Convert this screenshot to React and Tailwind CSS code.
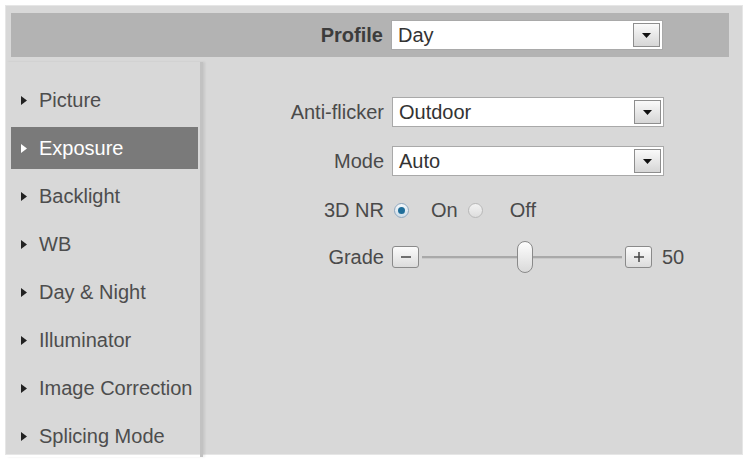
import React from 'react';

const menu = ['Picture', 'Exposure', 'Backlight', 'WB', 'Day & Night', 'Illuminator', 'Image Correction', 'Splicing Mode'];

const DropButton = () => (
  <div className="absolute right-[2px] top-[2px] bottom-[2px] w-[27px] border border-[#8e8e8e] bg-gradient-to-b from-[#fafafa] to-[#d6d6d6] flex items-center justify-center">
    <svg width="9" height="5" viewBox="0 0 9 5"><path d="M0 0h9L4.5 5z" fill="#111" /></svg>
  </div>
);

const Select = ({ value }) => (
  <div className="relative w-[272px] h-[30px] bg-white border border-[#a9a9a9] flex items-center pl-[6px] text-[20px] text-[#333]">
    {value}
    <DropButton />
  </div>
);

const Label = ({ children }) => (
  <div className="w-[189px] shrink-0 pr-[8px] text-right text-[20px] text-[#4a4a4a]">{children}</div>
);

const SmallBtn = ({ sign }) => (
  <div className="w-[27px] h-[22px] rounded-[3px] border border-[#8a8a8a] bg-gradient-to-b from-[#fbfbfb] to-[#dcdcdc] flex items-center justify-center">
    <svg width="12" height="12" viewBox="0 0 12 12">
      <path d="M1 6h10" stroke="#444" strokeWidth="1.5" />
      {sign === '+' && <path d="M6 1v10" stroke="#444" strokeWidth="1.5" />}
    </svg>
  </div>
);

export default function App() {
  return (
    <div className="w-[748px] h-[460px] bg-white pt-[5px] pl-[5px] overflow-hidden font-['Liberation_Sans',Arial,sans-serif]">
      <div className="w-[738px] h-[450px] bg-[#d8d8d8] border border-[#e6e6e6] flex flex-col">
        {/* Profile bar */}
        <div className="ml-[5px] mt-[7px] w-[718px] h-[44px] bg-[#b3b3b3] flex items-center shrink-0">
          <div className="w-[380px] pr-[8px] text-right text-[20px] font-bold text-[#3c3c3c]">Profile</div>
          <Select value="Day" />
        </div>

        <div className="flex flex-1 mt-[5px]">
          {/* Sidebar */}
          <div className="w-[197px] shrink-0 pl-[5px] pt-[17px] flex flex-col gap-[6px] border-r-[3px] border-[#c2c2c2] shadow-[2px_0_2px_rgba(0,0,0,0.08)]">
            {menu.map((m) => {
              const active = m === 'Exposure';
              return (
                <div
                  key={m}
                  className={`w-[187px] h-[42px] flex items-center pl-[10px] text-[20px] whitespace-nowrap ${active ? 'bg-[#7a7a7a] text-white' : 'text-[#4d4d4d]'}`}
                >
                  <svg width="6" height="9" viewBox="0 0 6 9" className="mr-[12px]">
                    <path d="M0 0l6 4.5L0 9z" fill={active ? '#fff' : '#222'} />
                  </svg>
                  {m}
                </div>
              );
            })}
          </div>

          {/* Form */}
          <div className="flex-1 pt-[35px]">
            <div className="flex items-center">
              <Label>Anti-flicker</Label>
              <Select value="Outdoor" />
            </div>
            <div className="flex items-center mt-[19px]">
              <Label>Mode</Label>
              <Select value="Auto" />
            </div>
            <div className="flex items-center mt-[22px] h-[24px]">
              <Label>3D NR</Label>
              <div className="flex items-center text-[20px] text-[#4a4a4a]">
                <div className="w-[15px] h-[15px] rounded-full border border-[#8fa8bf] bg-gradient-to-b from-[#f4f8fb] to-[#cfdde8] flex items-center justify-center ml-[2px]">
                  <div className="w-[7px] h-[7px] rounded-full bg-[#1f6e9a]" />
                </div>
                <span className="ml-[22px]">On</span>
                <div className="w-[15px] h-[15px] rounded-full border border-[#b8b8b8] bg-gradient-to-b from-[#f2f2f2] to-[#dedede] ml-[10px]" />
                <span className="ml-[27px]">Off</span>
              </div>
            </div>
            <div className="flex items-center mt-[19px] h-[32px]">
              <Label>Grade</Label>
              <SmallBtn sign="-" />
              <div className="relative w-[206px] h-[32px] flex items-center">
                <div className="w-full mx-[3px] h-[3px] bg-[#a9a9a9] border-b border-[#c9c9c9]" />
                <div className="absolute left-[98px] top-0 w-[16px] h-[32px] rounded-full border border-[#8a8a8a] bg-gradient-to-b from-[#fdfdfd] to-[#dadada]" />
              </div>
              <SmallBtn sign="+" />
              <span className="ml-[10px] text-[20px] text-[#4a4a4a]">50</span>
            </div>
          </div>
        </div>
      </div>
    </div>
  );
}
